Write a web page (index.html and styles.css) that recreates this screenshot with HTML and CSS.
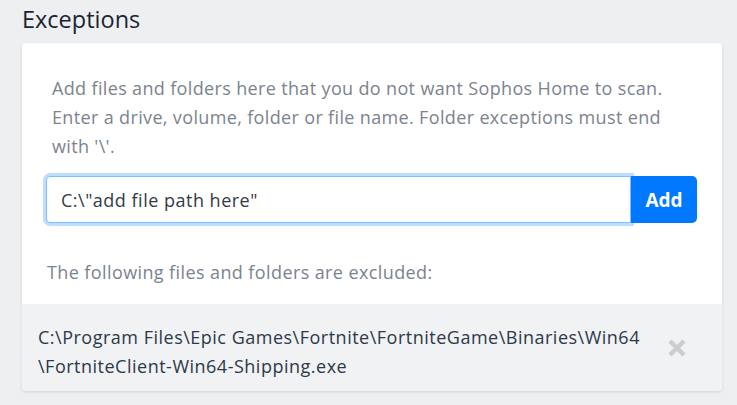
FILE: index.html
```html
<!DOCTYPE html>
<html>
<head>
<meta charset="utf-8">
<link rel="stylesheet" href="styles.css">
</head>
<body>
<div class="page">
  <h1 class="title">Exceptions</h1>
  <div class="card">
    <div class="card-body">
      <p class="intro">Add files and folders here that you do not want Sophos Home to scan. Enter a drive, volume, folder or file name. Folder exceptions must end with '\'.</p>
      <div class="input-group">
        <input class="path-input" type="text" value='C:\"add file path here"'>
        <button class="add-btn">Add</button>
      </div>
      <p class="excluded-label">The following files and folders are excluded:</p>
    </div>
    <div class="exclusion-row">
      <div class="exclusion-path">C:\Program Files\Epic Games\Fortnite\FortniteGame\Binaries\Win64<br>\FortniteClient-Win64-Shipping.exe</div>
      <svg class="remove-icon" width="20" height="20" viewBox="0 0 20 20"><path d="M3 3 L17 17 M17 3 L3 17" stroke="#c9ced2" stroke-width="4.5" stroke-linecap="butt"/></svg>
    </div>
  </div>
</div>
</body>
</html>
```
FILE: styles.css
```css
html, body { margin: 0; padding: 0; }
body {
  background: #eeeff1;
  font-family: "Open Sans", "Noto Sans", sans-serif;
  width: 737px;
  height: 405px;
  overflow: hidden;
}
.page { padding: 4px 15px 0 22px; }
.title {
  margin: 0 0 9px 0;
  font-size: 23.5px;
  font-weight: 400;
  color: #1b2433;
  line-height: 30px;
}
.card {
  background: #fff;
  border-radius: 4px;
  box-shadow: 0 1px 3px rgba(0,0,0,0.12);
  overflow: hidden;
}
.card-body { padding: 31px 25px 17px 24px; }
.intro {
  margin: 0 0 15px 6px;
  font-size: 18px;
  letter-spacing: 0.35px;
  line-height: 29px;
  color: #7b838e;
}
.input-group { display: flex; height: 47px; }
.path-input {
  flex: 1;
  box-sizing: border-box;
  height: 47px;
  border: 1px solid #80bdff;
  border-radius: 4px 0 0 4px;
  box-shadow: 0 0 0 3px rgba(0,123,255,0.25);
  padding: 0 14px;
  font-family: inherit;
  font-size: 18px;
  letter-spacing: 0.5px;
  color: #333a44;
  outline: none;
}
.add-btn {
  position: relative;
  width: 66px;
  height: 47px;
  border: none;
  border-radius: 0 5px 5px 0;
  background: #0078ff;
  color: #fff;
  font-family: inherit;
  font-size: 19px;
  font-weight: 700;
}
.excluded-label {
  margin: 35px 0 0 1px;
  font-size: 18px;
  letter-spacing: 0.4px;
  line-height: 29px;
  color: #7b838e;
}
.exclusion-row {
  background: #f1f2f4;
  display: flex;
  align-items: flex-start;
  justify-content: space-between;
  padding: 19px 35px 10px 16px;
}
.exclusion-path {
  font-size: 18px;
  letter-spacing: 0.5px;
  line-height: 29px;
  color: #2c3949;
}
.remove-icon { margin-top: 15px; }
```
